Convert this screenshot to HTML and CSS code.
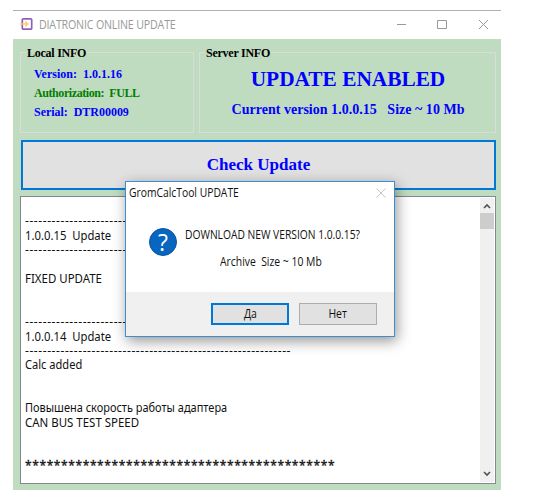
FILE: index.html
```html
<!DOCTYPE html>
<html lang="ru">
<head>
<meta charset="utf-8">
<title>DIATRONIC ONLINE UPDATE</title>
<link rel="stylesheet" href="styles.css">
</head>
<body>
<main class="window">
  <header class="titlebar">
    <svg class="app-icon" width="14" height="14" viewBox="0 0 14 14"><rect x="2.3" y="1.8" width="9.4" height="10.4" rx="1" fill="#fff" stroke="#8e61b2" stroke-width="1.7"/><path d="M0 7h8M5.3 4.5l2.6 2.5-2.6 2.5" fill="none" stroke="#f8cd6c" stroke-width="1.3"/></svg>
    <span class="window-title">DIATRONIC ONLINE UPDATE</span>
    <svg class="controls" width="92" height="12" viewBox="0 0 92 12" fill="none" stroke="#999"><path d="M0 6.5h9M82 2l9 9M91 2l-9 9"/><path d="M40.5 2.5h9v8h-9z"/></svg>
  </header>
  <section class="body">
    <div class="groups">
      <section class="group local">
        <h2 class="legend">Local INFO</h2>
        <p class="version">Version:&nbsp; 1.0.1.16</p>
        <p class="auth">Authorization:&nbsp; FULL</p>
        <p class="serial">Serial:&nbsp; DTR00009</p>
      </section>
      <section class="group server">
        <h2 class="legend">Server INFO</h2>
        <p class="status">UPDATE ENABLED</p>
        <p class="current">Current version 1.0.0.15 &nbsp; Size ~ 10 Mb</p>
      </section>
    </div>
    <button class="check"><span>Check Update</span></button>
    <section class="log">
      <div class="log-text">
        <p></p>
        <p class="dashes">------------------------------------------------------------</p>
        <p class="release">1.0.0.15&nbsp; Update</p>
        <p class="dashes">------------------------------------------------------------</p>
        <p></p>
        <p class="fixed">FIXED UPDATE</p>
        <p></p>
        <p></p>
        <p class="dashes">------------------------------------------------------------</p>
        <p class="release">1.0.0.14&nbsp; Update</p>
        <p class="dashes">------------------------------------------------------------</p>
        <p class="calc">Calc added</p>
        <p></p>
        <p></p>
        <p class="speed">Повышена скорость работы адаптера</p>
        <p class="can">CAN BUS TEST SPEED</p>
        <p></p>
        <p></p>
        <p class="stars">*******************************************</p>
      </div>
      <div class="scrollbar">
        <svg width="8" height="6" viewBox="0 0 8 6" fill="none" stroke="#555" stroke-width="1.7"><path d="M1 5l3-3 3 3"/></svg>
        <div class="thumb"></div>
        <svg class="down" width="8" height="6" viewBox="0 0 8 6" fill="none" stroke="#555" stroke-width="1.7"><path d="M1 1l3 3 3-3"/></svg>
      </div>
    </section>
  </section>
</main>
<div class="dialog" role="dialog">
  <header class="dialog-head">
    <span class="dialog-title">GromCalcTool UPDATE</span>
    <svg width="10" height="10" viewBox="0 0 10 10" stroke="#c4c4c4"><path d="M.5.5l9 9M9.5.5l-9 9"/></svg>
  </header>
  <div class="dialog-main">
    <div class="question"><span>?</span></div>
    <div class="message">
      <p class="download">DOWNLOAD NEW VERSION 1.0.0.15?</p>
      <p class="archive">Archive&nbsp; Size ~ 10 Mb</p>
    </div>
  </div>
  <footer class="actions">
    <button class="yes"><span>Да</span></button>
    <button class="no"><span>Нет</span></button>
  </footer>
</div>
</body>
</html>
```
FILE: styles.css
```css
* { box-sizing: border-box; }
body { margin: 0; width: 534px; height: 500px; overflow: hidden; background: #fff; }
p, h2 { margin: 0; white-space: pre; }
button { padding: 0; border-radius: 0; }
.window { width: 488px; height: 480px; margin: 10px 0 0 13px; display: flex; flex-direction: column; }
.titlebar { height: 29px; flex: none; border-top: 1px solid #b0b0b0; display: flex; align-items: center; padding: 0 12px 0 7px; }
.app-icon { margin-right: 5px; position: relative; top: -1px; }
.window-title { font: 12px/16px "Open Sans", sans-serif; letter-spacing: -0.2px; color: #999; white-space: nowrap; transform: scaleX(.888); transform-origin: left; }
.controls { margin-left: auto; position: relative; top: -1px; }
.body { flex: 1; background: #c0dcc0; padding: 13px 5px 6px 7px; display: flex; flex-direction: column; }
.groups { display: flex; gap: 5px; height: 81px; font-family: "Liberation Serif", serif; font-weight: bold; color: #00f; }
.group { position: relative; border: 1px solid #d9dcd9; }
.local { width: 174px; padding: 12px 0 0 13px; font-size: 12px; line-height: 19px; }
.server { flex: 1; text-align: center; }
.legend { position: absolute; top: -8px; left: 5px; padding: 0 1px; font-size: 12px; letter-spacing: -.25px; line-height: 16px; color: #000; background: #c0dcc0; }
.auth { color: #008000; letter-spacing: -.42px; }
.serial { letter-spacing: -.03px; }
.status { margin-top: 13px; padding-left: 1px; font-size: 21.33px; line-height: 26px; }
.current { margin-top: 8px; padding-left: 1px; font-size: 14px; letter-spacing: .02px; line-height: 20px; }
.check { width: 475px; height: 50px; margin: 7px 0 6px 1px; flex: none; background: #e1e1e1; border: 2px solid #0078d7; color: #00f; font: bold 17px/24px "Liberation Serif", serif; }
.log { flex: 1; min-height: 0; border: 1px solid #828790; background: #fff; display: flex; padding: 1px; }
.log-text { flex: 1; padding: 2px 0 0 3px; font: 12px/14.4px "Noto Sans", sans-serif; color: #111; }
.log-text p { height: 14.4px; transform-origin: left; }
.dashes { letter-spacing: .57px; }
.stars { letter-spacing: .6px; -webkit-text-stroke: .3px #111; }
.release { transform: scaleX(.94); }
.fixed, .can { transform: scaleX(.955); }
.calc { transform: scaleX(.925); }
.speed { transform: scaleX(.915); }
.scrollbar { width: 14px; background: #f0f0f0; display: flex; flex-direction: column; align-items: center; padding: 5px 0; }
.thumb { width: 14px; height: 16px; flex: none; margin-top: 4px; background: #cdcdcd; }
.down { margin-top: auto; }
.dialog { position: absolute; left: 125px; top: 181px; width: 270px; height: 156px; border: 1px solid #3c8dd2; background: #fff; box-shadow: 2px 4px 13px rgba(0,0,0,.42); display: flex; flex-direction: column; font: 12px/16px "Open Sans", sans-serif; color: #111; }
.dialog-head { height: 21px; display: flex; align-items: center; justify-content: space-between; padding: 0 8px 0 3px; }
.dialog-title { transform: scaleX(.86); transform-origin: left; }
.dialog-main { flex: 1; display: flex; }
.question { width: 28px; height: 28px; margin: 25px 0 0 23px; border-radius: 50%; background: #0866c0; border: 1px solid #0755a0; color: #fff; display: grid; place-items: center; font: 23px/26px "Open Sans", sans-serif; }
.message { padding: 24px 0 0 8px; }
.message p { transform: scaleX(.855); transform-origin: left; }
.message .archive { margin: 11px 0 0 35px; transform: scaleX(.865); }
.actions { height: 44px; background: #f0f0f0; display: flex; gap: 10px; padding: 11px 0 0 85px; }
.actions button { width: 78px; height: 22px; background: #e1e1e1; border: 1px solid #adadad; font: 12px/16px "Open Sans", sans-serif; color: #111; }
.actions button span { display: inline-block; transform: scaleX(.87); }
.actions .yes { border: 2px solid #0078d7; }
```
